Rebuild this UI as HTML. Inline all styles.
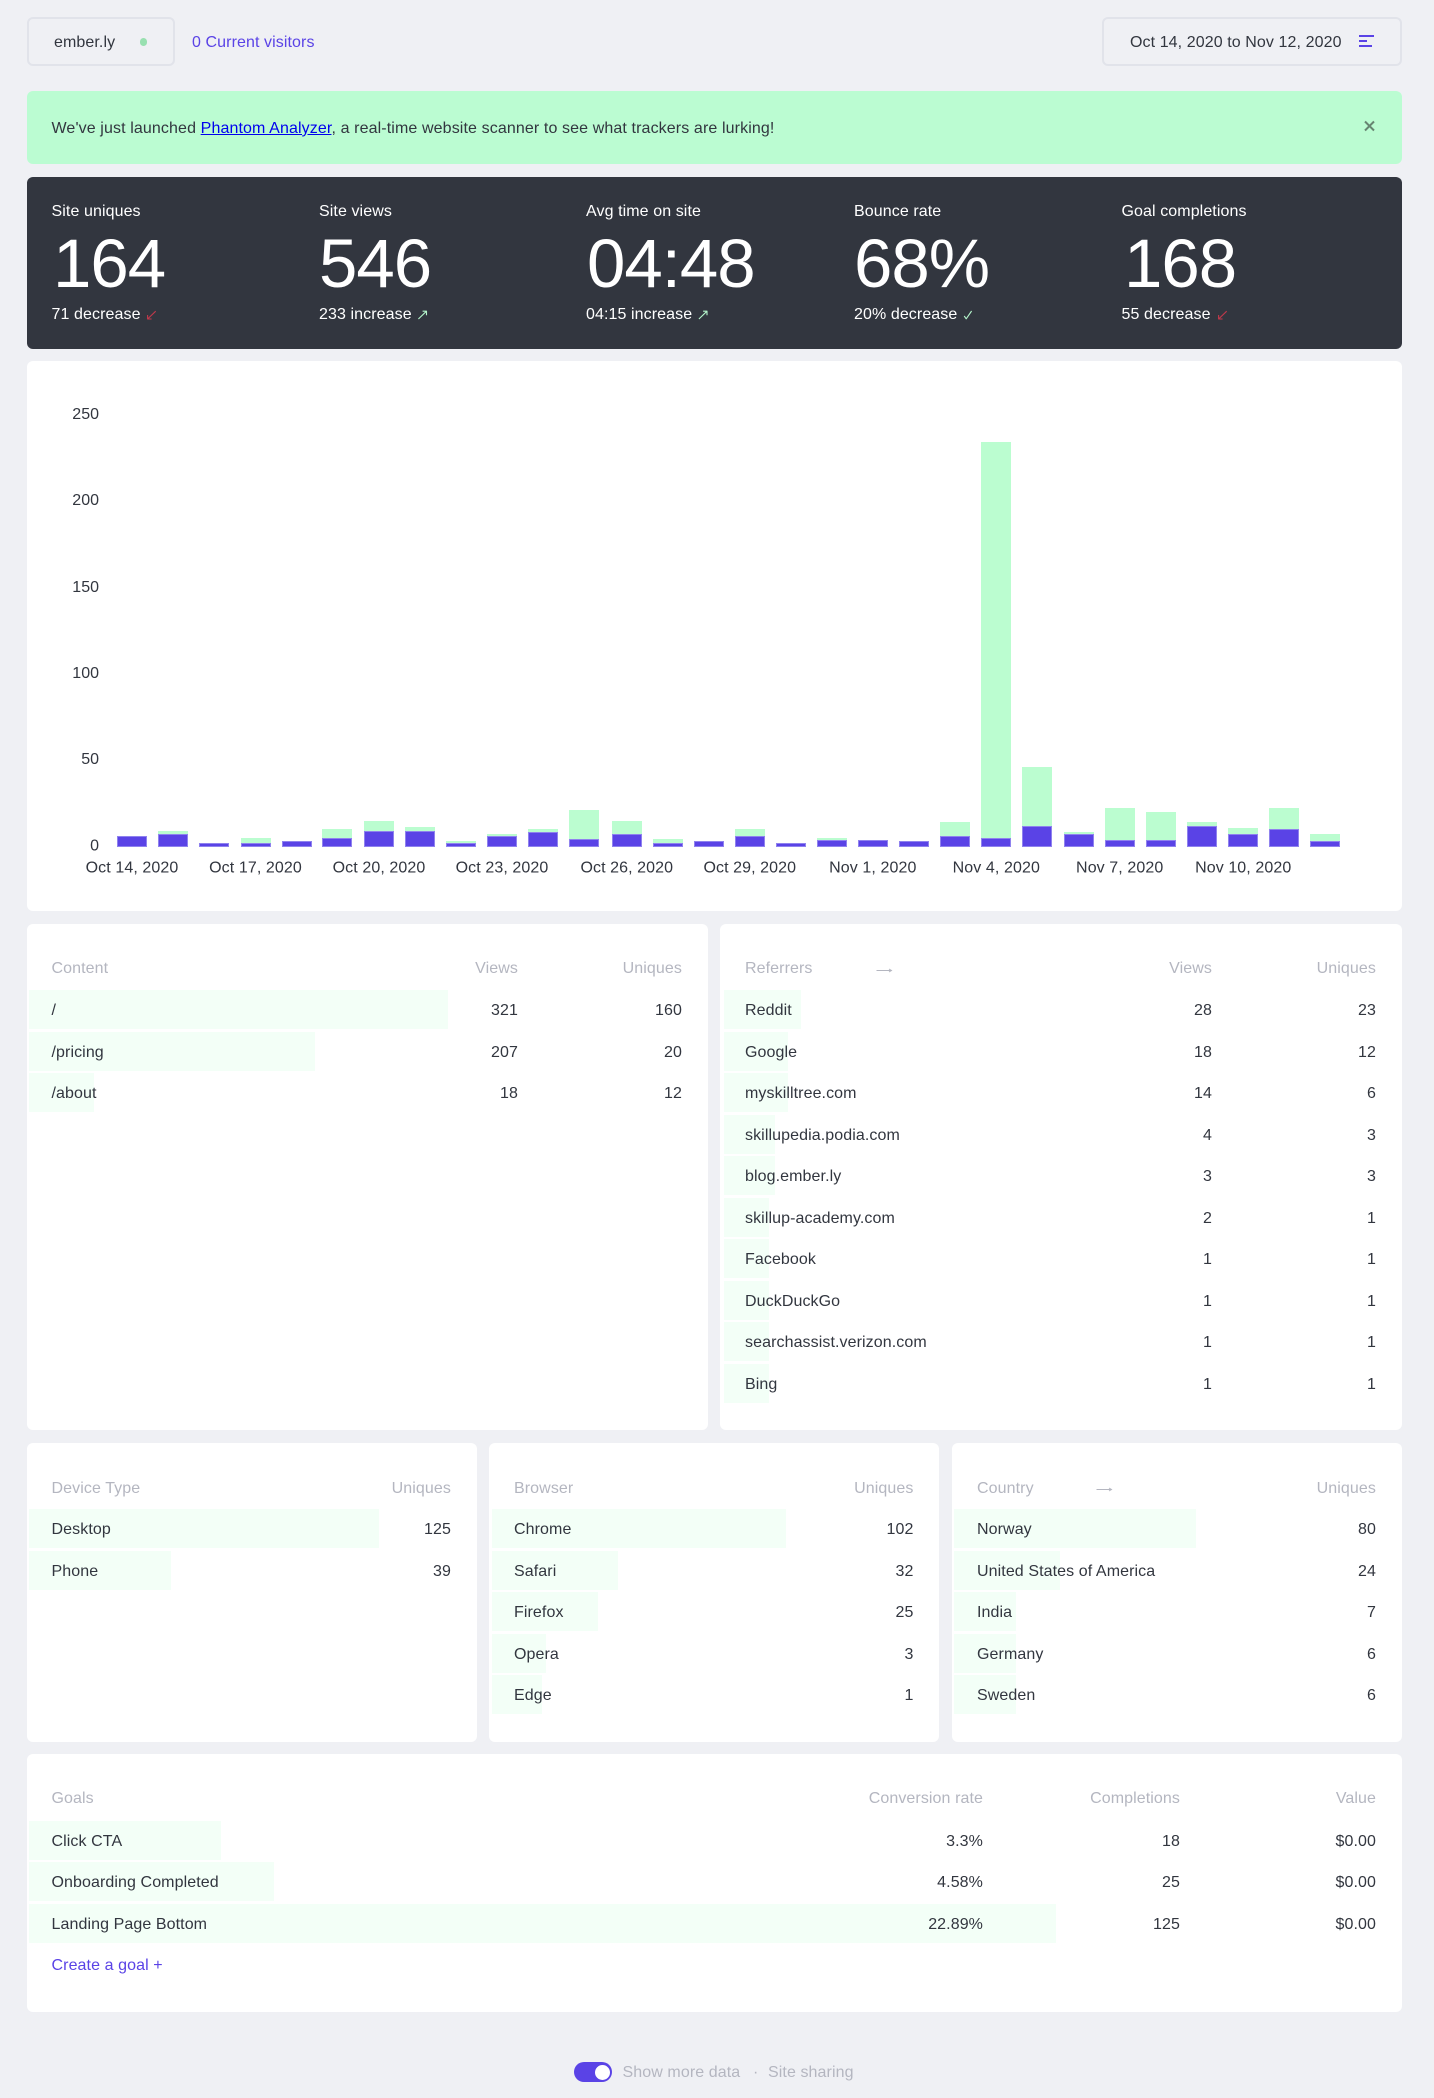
<!DOCTYPE html>
<html><head><meta charset="utf-8"><title>ember.ly</title>
<style>
html,body{margin:0;padding:0}
body{width:1434px;height:2098px;background:#eff0f4;position:relative;overflow:hidden;font-family:"Liberation Sans",sans-serif;font-size:16px;color:#32363f}
.c,.b,.t,.big,svg{position:absolute}
.c{background:#fff;border-radius:6px}
.b{background:#f3fff7;height:39px}
.t{white-space:nowrap;line-height:39px;margin-top:1px;letter-spacing:.09px}
.h{color:#b4b6c0;line-height:24px}
.w{color:#fff;line-height:24px}
.u{color:#5a43e6}
.big{color:#fff;font-size:69px;line-height:69px;letter-spacing:-1px;white-space:nowrap}
</style></head><body>

<div class="c" style="left:27px;top:17px;width:144px;height:45px;background:transparent;border:2px solid #e1e3ea"></div>
<span class="t" style="left:54px;top:22px">ember.ly</span>
<div style="position:absolute;left:139.5px;top:38px;width:7.5px;height:7.5px;border-radius:50%;background:#98e0b0"></div>
<span class="t u" style="left:192px;top:22px">0 Current visitors</span>
<div class="c" style="left:1102px;top:17px;width:296px;height:45px;background:transparent;border:2px solid #e1e3ea"></div>
<span class="t" style="left:1130px;top:22px">Oct 14, 2020 to Nov 12, 2020</span>
<div style="position:absolute;left:1359px;top:35px;width:15px;height:2px;background:#5a43e6"></div>
<div style="position:absolute;left:1359px;top:40px;width:8px;height:2px;background:#5a43e6"></div>
<div style="position:absolute;left:1359px;top:45px;width:13px;height:2px;background:#5a43e6"></div>

<div class="c" style="left:27px;top:91px;width:1375px;height:73px;background:#bbfcd2"></div>
<span class="t" style="left:51.5px;top:108px;letter-spacing:.115px">We've just launched <span style="color:#0000ee;text-decoration:underline">Phantom Analyzer</span>, a real-time website scanner to see what trackers are lurking!</span>

<div class="c" style="left:27px;top:177px;width:1375px;height:172px;background:#32363f"></div>
<span class="t w" style="left:51.5px;top:199px">Site uniques</span>
<span class="t w" style="left:319px;top:199px">Site views</span>
<span class="t w" style="left:586px;top:199px">Avg time on site</span>
<span class="t w" style="left:854px;top:199px">Bounce rate</span>
<span class="t w" style="left:1121.5px;top:199px">Goal completions</span>
<span class="big" style="left:53px;top:228.5px">164</span>
<span class="big" style="left:319px;top:228.5px">546</span>
<span class="big" style="left:587px;top:228.5px">04:48</span>
<span class="big" style="left:854px;top:228.5px">68%</span>
<span class="big" style="left:1124px;top:228.5px">168</span>
<span class="t w" style="left:51.5px;top:302px">71 decrease</span>
<span class="t w" style="left:319px;top:302px">233 increase</span>
<span class="t w" style="left:586px;top:302px">04:15 increase</span>
<span class="t w" style="left:854px;top:302px">20% decrease</span>
<span class="t w" style="left:1121.5px;top:302px">55 decrease</span>

<div class="c" style="left:27px;top:361px;width:1375px;height:550px"></div>
<div class="c" style="left:27px;top:924px;width:681px;height:505.5px"></div>
<div class="c" style="left:720px;top:924px;width:682px;height:505.5px"></div>
<div class="c" style="left:27px;top:1443px;width:450px;height:299px"></div>
<div class="c" style="left:489px;top:1443px;width:450px;height:299px"></div>
<div class="c" style="left:952px;top:1443px;width:450px;height:299px"></div>
<div class="c" style="left:27px;top:1754px;width:1375px;height:258px"></div>

<svg width="1434" height="2098" style="left:0;top:0" font-family="Liberation Sans, sans-serif" font-size="16">
<g fill="none" stroke-width="1.1" stroke-linejoin="round">
<g stroke="#c0394b"><path d="M155.7 311.2L147.6 319M147.6 315V319H151.6"/><path d="M1226.7 311.2L1218.6 319M1218.6 315V319H1222.6"/></g>
<g stroke="#b4f5cb"><path d="M418.4 319L426.5 311.2M422.6 311.2H426.5V315.2"/><path d="M698.9 319L707 311.2M703.1 311.2H707V315.2"/><path d="M964.2 316L966.2 318.8L971.6 311"/></g>
</g>
<path d="M1365 121.5L1374 130.5M1374 121.5L1365 130.5" stroke="#668471" stroke-width="2" fill="none"/>

<g fill="#bbfdd0">
<rect x="158" y="831" width="30" height="16"/><rect x="241" y="838" width="30" height="9"/><rect x="322" y="829" width="30" height="18"/><rect x="364" y="821" width="30" height="26"/><rect x="405" y="827" width="30" height="20"/><rect x="446" y="841" width="30" height="6"/><rect x="487" y="834" width="30" height="13"/><rect x="528" y="829" width="30" height="18"/><rect x="569" y="810" width="30" height="37"/><rect x="612" y="821" width="30" height="26"/><rect x="653" y="839" width="30" height="8"/><rect x="735" y="829" width="30" height="18"/><rect x="817" y="838" width="30" height="9"/><rect x="940" y="822" width="30" height="25"/><rect x="981" y="442" width="30" height="405"/><rect x="1022" y="767" width="30" height="80"/><rect x="1064" y="832" width="30" height="15"/><rect x="1105" y="808" width="30" height="39"/><rect x="1146" y="812" width="30" height="35"/><rect x="1187" y="822" width="30" height="25"/><rect x="1228" y="828" width="30" height="19"/><rect x="1269" y="808" width="30" height="39"/><rect x="1310" y="834" width="30" height="13"/>
</g>
<g fill="#5a43e6" stroke="#8f82ee" stroke-width="1">
<rect x="117.5" y="836.5" width="29" height="10"/><rect x="158.5" y="834.5" width="29" height="12"/><rect x="199.5" y="843.5" width="29" height="3"/><rect x="241.5" y="843.5" width="29" height="3"/><rect x="282.5" y="841.5" width="29" height="5"/><rect x="322.5" y="838.5" width="29" height="8"/><rect x="364.5" y="831.5" width="29" height="15"/><rect x="405.5" y="831.5" width="29" height="15"/><rect x="446.5" y="843.5" width="29" height="3"/><rect x="487.5" y="836.5" width="29" height="10"/><rect x="528.5" y="832.5" width="29" height="14"/><rect x="569.5" y="839.5" width="29" height="7"/><rect x="612.5" y="834.5" width="29" height="12"/><rect x="653.5" y="843.5" width="29" height="3"/><rect x="694.5" y="841.5" width="29" height="5"/><rect x="735.5" y="836.5" width="29" height="10"/><rect x="776.5" y="843.5" width="29" height="3"/><rect x="817.5" y="840.5" width="29" height="6"/><rect x="858.5" y="840.5" width="29" height="6"/><rect x="899.5" y="841.5" width="29" height="5"/><rect x="940.5" y="836.5" width="29" height="10"/><rect x="981.5" y="838.5" width="29" height="8"/><rect x="1022.5" y="826.5" width="29" height="20"/><rect x="1064.5" y="834.5" width="29" height="12"/><rect x="1105.5" y="840.5" width="29" height="6"/><rect x="1146.5" y="840.5" width="29" height="6"/><rect x="1187.5" y="826.5" width="29" height="20"/><rect x="1228.5" y="834.5" width="29" height="12"/><rect x="1269.5" y="829.5" width="29" height="17"/><rect x="1310.5" y="841.5" width="29" height="5"/>
</g>
<g fill="#32363f" text-anchor="end">
<text x="99" y="419">250</text><text x="99" y="505">200</text><text x="99" y="592">150</text><text x="99" y="678">100</text><text x="99" y="764">50</text><text x="99" y="850.5">0</text>
</g>
<g fill="#32363f" text-anchor="middle" letter-spacing=".09">
<text x="132" y="872.5">Oct 14, 2020</text><text x="255.5" y="872.5">Oct 17, 2020</text><text x="379" y="872.5">Oct 20, 2020</text><text x="502" y="872.5">Oct 23, 2020</text><text x="626.8" y="872.5">Oct 26, 2020</text><text x="749.8" y="872.5">Oct 29, 2020</text><text x="872.8" y="872.5">Nov 1, 2020</text><text x="996.3" y="872.5">Nov 4, 2020</text><text x="1119.7" y="872.5">Nov 7, 2020</text><text x="1243.2" y="872.5">Nov 10, 2020</text>
</g>
<g fill="none" stroke="#b4b6c0" stroke-width="1">
<path d="M876.5 970.5H891.5M889 969L891.5 970.5L889 972"/>
<path d="M1096.5 1489.5H1111.5M1109 1488L1111.5 1489.5L1109 1491"/>
</g>
</svg>

<!-- Content -->
<span class="t h" style="left:51.5px;top:956px">Content</span>
<span class="t h" style="right:916px;top:956px">Views</span>
<span class="t h" style="right:752px;top:956px">Uniques</span>
<div class="b" style="left:29px;top:990px;width:419px"></div>
<div class="b" style="left:29px;top:1032px;width:286px"></div>
<div class="b" style="left:29px;top:1073px;width:65px"></div>
<span class="t" style="left:51.5px;top:990px">/</span><span class="t" style="right:916px;top:990px">321</span><span class="t" style="right:752px;top:990px">160</span>
<span class="t" style="left:51.5px;top:1032px">/pricing</span><span class="t" style="right:916px;top:1032px">207</span><span class="t" style="right:752px;top:1032px">20</span>
<span class="t" style="left:51.5px;top:1073px">/about</span><span class="t" style="right:916px;top:1073px">18</span><span class="t" style="right:752px;top:1073px">12</span>

<!-- Referrers -->
<span class="t h" style="left:745px;top:956px">Referrers</span>
<span class="t h" style="right:222px;top:956px">Views</span>
<span class="t h" style="right:58px;top:956px">Uniques</span>
<div class="b" style="left:723.5px;top:990px;width:77.5px"></div>
<div class="b" style="left:723.5px;top:1032px;width:64.5px"></div>
<div class="b" style="left:723.5px;top:1073px;width:64.5px"></div>
<div class="b" style="left:723.5px;top:1115px;width:51.5px"></div>
<div class="b" style="left:723.5px;top:1156px;width:51.5px"></div>
<div class="b" style="left:723.5px;top:1198px;width:45.5px"></div>
<div class="b" style="left:723.5px;top:1239px;width:45.5px"></div>
<div class="b" style="left:723.5px;top:1281px;width:45.5px"></div>
<div class="b" style="left:723.5px;top:1322px;width:45.5px"></div>
<div class="b" style="left:723.5px;top:1364px;width:45.5px"></div>
<span class="t" style="left:745px;top:990px">Reddit</span><span class="t" style="right:222px;top:990px">28</span><span class="t" style="right:58px;top:990px">23</span>
<span class="t" style="left:745px;top:1032px">Google</span><span class="t" style="right:222px;top:1032px">18</span><span class="t" style="right:58px;top:1032px">12</span>
<span class="t" style="left:745px;top:1073px">myskilltree.com</span><span class="t" style="right:222px;top:1073px">14</span><span class="t" style="right:58px;top:1073px">6</span>
<span class="t" style="left:745px;top:1115px">skillupedia.podia.com</span><span class="t" style="right:222px;top:1115px">4</span><span class="t" style="right:58px;top:1115px">3</span>
<span class="t" style="left:745px;top:1156px">blog.ember.ly</span><span class="t" style="right:222px;top:1156px">3</span><span class="t" style="right:58px;top:1156px">3</span>
<span class="t" style="left:745px;top:1198px">skillup-academy.com</span><span class="t" style="right:222px;top:1198px">2</span><span class="t" style="right:58px;top:1198px">1</span>
<span class="t" style="left:745px;top:1239px">Facebook</span><span class="t" style="right:222px;top:1239px">1</span><span class="t" style="right:58px;top:1239px">1</span>
<span class="t" style="left:745px;top:1281px">DuckDuckGo</span><span class="t" style="right:222px;top:1281px">1</span><span class="t" style="right:58px;top:1281px">1</span>
<span class="t" style="left:745px;top:1322px">searchassist.verizon.com</span><span class="t" style="right:222px;top:1322px">1</span><span class="t" style="right:58px;top:1322px">1</span>
<span class="t" style="left:745px;top:1364px">Bing</span><span class="t" style="right:222px;top:1364px">1</span><span class="t" style="right:58px;top:1364px">1</span>

<!-- Device -->
<span class="t h" style="left:51.5px;top:1476px">Device Type</span>
<span class="t h" style="right:983px;top:1476px">Uniques</span>
<div class="b" style="left:29px;top:1509px;width:350px"></div>
<div class="b" style="left:29px;top:1551px;width:142px"></div>
<span class="t" style="left:51.5px;top:1509px">Desktop</span><span class="t" style="right:983px;top:1509px">125</span>
<span class="t" style="left:51.5px;top:1551px">Phone</span><span class="t" style="right:983px;top:1551px">39</span>

<!-- Browser -->
<span class="t h" style="left:514px;top:1476px">Browser</span>
<span class="t h" style="right:520.5px;top:1476px">Uniques</span>
<div class="b" style="left:492px;top:1509px;width:294px"></div>
<div class="b" style="left:492px;top:1551px;width:126px"></div>
<div class="b" style="left:492px;top:1592px;width:106px"></div>
<div class="b" style="left:492px;top:1634px;width:54px"></div>
<div class="b" style="left:492px;top:1675px;width:50px"></div>
<span class="t" style="left:514px;top:1509px">Chrome</span><span class="t" style="right:520.5px;top:1509px">102</span>
<span class="t" style="left:514px;top:1551px">Safari</span><span class="t" style="right:520.5px;top:1551px">32</span>
<span class="t" style="left:514px;top:1592px">Firefox</span><span class="t" style="right:520.5px;top:1592px">25</span>
<span class="t" style="left:514px;top:1634px">Opera</span><span class="t" style="right:520.5px;top:1634px">3</span>
<span class="t" style="left:514px;top:1675px">Edge</span><span class="t" style="right:520.5px;top:1675px">1</span>

<!-- Country -->
<span class="t h" style="left:977px;top:1476px">Country</span>
<span class="t h" style="right:58px;top:1476px">Uniques</span>
<div class="b" style="left:954px;top:1509px;width:242px"></div>
<div class="b" style="left:954px;top:1551px;width:106px"></div>
<div class="b" style="left:954px;top:1592px;width:62px"></div>
<div class="b" style="left:954px;top:1634px;width:62px"></div>
<div class="b" style="left:954px;top:1675px;width:62px"></div>
<span class="t" style="left:977px;top:1509px">Norway</span><span class="t" style="right:58px;top:1509px">80</span>
<span class="t" style="left:977px;top:1551px">United States of America</span><span class="t" style="right:58px;top:1551px">24</span>
<span class="t" style="left:977px;top:1592px">India</span><span class="t" style="right:58px;top:1592px">7</span>
<span class="t" style="left:977px;top:1634px">Germany</span><span class="t" style="right:58px;top:1634px">6</span>
<span class="t" style="left:977px;top:1675px">Sweden</span><span class="t" style="right:58px;top:1675px">6</span>

<!-- Goals -->
<span class="t h" style="left:51.5px;top:1786px">Goals</span>
<span class="t h" style="right:451px;top:1786px">Conversion rate</span>
<span class="t h" style="right:254px;top:1786px">Completions</span>
<span class="t h" style="right:58px;top:1786px">Value</span>
<div class="b" style="left:29px;top:1821px;width:192px"></div>
<div class="b" style="left:29px;top:1862px;width:244.5px"></div>
<div class="b" style="left:29px;top:1904px;width:1027px"></div>
<span class="t" style="left:51.5px;top:1821px">Click CTA</span><span class="t" style="right:451px;top:1821px">3.3%</span><span class="t" style="right:254px;top:1821px">18</span><span class="t" style="right:58px;top:1821px">$0.00</span>
<span class="t" style="left:51.5px;top:1862px">Onboarding Completed</span><span class="t" style="right:451px;top:1862px">4.58%</span><span class="t" style="right:254px;top:1862px">25</span><span class="t" style="right:58px;top:1862px">$0.00</span>
<span class="t" style="left:51.5px;top:1904px">Landing Page Bottom</span><span class="t" style="right:451px;top:1904px">22.89%</span><span class="t" style="right:254px;top:1904px">125</span><span class="t" style="right:58px;top:1904px">$0.00</span>
<span class="t u" style="left:51.5px;top:1945px">Create a goal +</span>

<!-- Footer -->
<div style="position:absolute;left:574px;top:2062px;width:38px;height:20px;border-radius:10px;background:#5a43e6"></div>
<div style="position:absolute;left:594.5px;top:2064.5px;width:15px;height:15px;border-radius:50%;background:#fff"></div>
<span class="t h" style="left:622.5px;top:2060px">Show more data</span>
<span class="t h" style="left:753px;top:2060px">·</span>
<span class="t h" style="left:768px;top:2060px">Site sharing</span>
</body></html>
